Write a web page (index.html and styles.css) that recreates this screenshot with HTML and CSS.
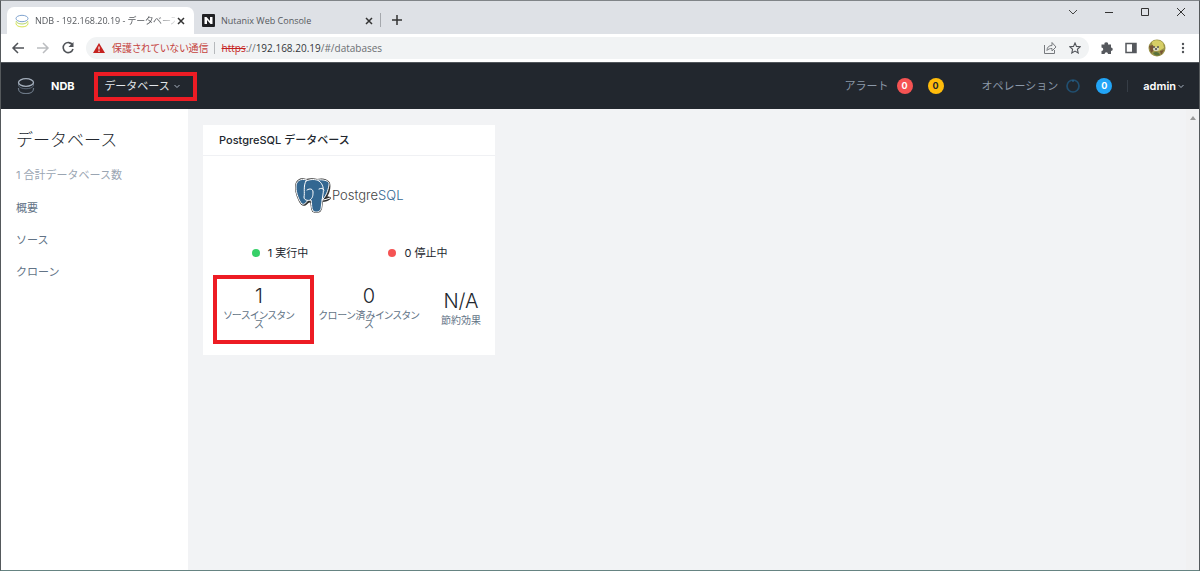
FILE: index.html
```html
<!DOCTYPE html>
<html lang="ja">
<head>
    <meta charset="UTF-8">
    <meta name="viewport" content="width=device-width, initial-scale=1.0">
    <title>NDB - 192.168.20.19 - データベース</title>
    <link rel="stylesheet" href="styles.css">
</head>
<body>
    <div class="window">
        <div class="tabs">
            <div class="tab active">
                <svg width="14" height="14" viewBox="0 0 14 14" fill="none">
                    <path d="M1 8.500v1c0 4.500 12 4.500 12 0v-1" stroke="#d5e34e"/>
                    <path d="M1 7c1 4 11 4 12 0" stroke="#b4d56a"/>
                    <ellipse cx="7" cy="4.500" rx="6" ry="3.200" stroke="#7fa3cf"/>
                </svg>
                <span class="tab-title">NDB - 192.168.20.19 - データベース</span>
                <button class="close" aria-label="Close tab"><svg width="8" height="8" viewBox="0 0 8 8"><path d="M1 1l6 6M7 1L1 7" stroke="#333" stroke-width="1.5"/></svg></button>
            </div>
            <div class="tab">
                <svg width="13" height="13" viewBox="0 0 13 13">
                    <rect width="13" height="13" rx="1" fill="#202124"/>
                    <path d="M2.500 3h2l3.500 4V3h2.500v7h-2L5 6v4H2.500z" fill="#fff"/>
                </svg>
                <span class="tab-title">Nutanix Web Console</span>
                <button class="close" aria-label="Close tab"><svg width="8" height="8" viewBox="0 0 8 8"><path d="M1 1l6 6M7 1L1 7" stroke="#333" stroke-width="1.500"/></svg></button>
            </div>
            <button class="new-tab" aria-label="New tab"><svg width="10" height="10" viewBox="0 0 10 10"><path d="M5 0v10M0 5h10" stroke="#333" stroke-width="1.500"/></svg></button>
            <div class="window-buttons">
                <button aria-label="Tab search"><svg width="10" height="10" viewBox="0 0 10 10" fill="none"><path d="M1 3l4 4 4-4" stroke="#444"/></svg></button>
                <button aria-label="Minimize"><svg width="10" height="10" viewBox="0 0 10 10"><path d="M1 5.500h8" stroke="#333"/></svg></button>
                <button aria-label="Maximize"><svg width="10" height="10" viewBox="0 0 10 10" fill="none"><path d="M1.500 1.500h7v7h-7z" stroke="#333"/></svg></button>
                <button aria-label="Close"><svg width="10" height="10" viewBox="0 0 10 10"><path d="M1 1l8 8M9 1L1 9" stroke="#333"/></svg></button>
            </div>
        </div>

        <div class="toolbar">
            <button aria-label="Back"><svg width="14" height="14" viewBox="0 0 14 14" fill="none"><path d="M13 7H2M7 2L2 7l5 5" stroke="#505358" stroke-width="1.500"/></svg></button>
            <button aria-label="Forward"><svg width="14" height="14" viewBox="0 0 14 14" fill="none"><path d="M1 7h11M7 2l5 5-5 5" stroke="#bbbdc0" stroke-width="1.500"/></svg></button>
            <button aria-label="Reload"><svg width="14" height="14" viewBox="0 0 14 14" fill="none"><path d="M11.500 4A5 5 0 1 0 12 8" stroke="#505358" stroke-width="1.600"/><path d="M12.500 1v5h-5z" fill="#505358"/></svg></button>
            <div class="address">
                <svg width="12" height="12" viewBox="0 0 12 12"><path d="M6 1l6 10H0z" fill="#c5221f"/><path d="M6 4.500v3M6 8.500V10" stroke="#fff" stroke-width="1.200"/></svg>
                <span class="warning">保護されていない通信</span>
                <span class="url"><s>https</s>://<b>192.168.20.19</b>/#/databases</span>
                <button aria-label="Share"><svg width="14" height="14" viewBox="0 0 14 14" fill="none"><path d="M1.500 4v8.500h10V9M4 9.500C4 6 6 4.500 9 4.500v-3L13 6l-4 4V7.500C7 7.500 5 8 4 9.500z" stroke="#777a7e"/></svg></button>
                <button aria-label="Bookmark"><svg width="12" height="12" viewBox="0 0 12 12" fill="none"><path d="M6 1l1.500 3.400 3.700.4-2.800 2.500.8 3.700L6 9.100 2.800 11l.8-3.700L.8 4.800l3.700-.4z" stroke="#505358" stroke-width="1.100"/></svg></button>
            </div>
            <button aria-label="Extensions"><svg width="14" height="14" viewBox="0 0 14 14"><path d="M1.500 3.500H4.500a1.800 1.800 0 1 1 3.500 0h3v3a1.700 1.700 0 1 1 0 3.500v3H8a1.700 1.700 0 0 0-3.400 0H1.500v-3a1.700 1.700 0 0 0 0-3.500z" fill="#55585d"/></svg></button>
            <button aria-label="Side panel"><svg width="12" height="12" viewBox="0 0 12 12"><path d="M1 1.500h10v9H1z" fill="none" stroke="#55585d" stroke-width="1.500"/><path d="M7 1.500h4v9H7z" fill="#55585d"/></svg></button>
            <button class="profile" aria-label="Profile">
                <svg width="18" height="18" viewBox="0 0 18 18">
                    <circle cx="9" cy="9" r="8.500" fill="#9a9448"/>
                    <path d="M4 3c3-3 9-2 11 1l1 5-5 3-6-2z" fill="#d6ce65"/>
                    <path d="M1 7l4-1 1 5-3 3zM12 12l4-1-3 5z" fill="#785335"/>
                    <ellipse cx="8" cy="10" rx="3" ry="2" fill="#d8d6bd"/>
                    <circle cx="6" cy="8" r="1" fill="#555"/><circle cx="10" cy="8" r="1" fill="#555"/><circle cx="8" cy="10" r="1" fill="#444"/>
                    <path d="M5 14c3-2 6-1 7 2-2 1-5 1-7-2z" fill="#58713b"/>
                </svg>
            </button>
            <button aria-label="Menu"><svg width="4" height="12" viewBox="0 0 4 12" fill="#505358"><circle cx="2" cy="2" r="1.200"/><circle cx="2" cy="6" r="1.200"/><circle cx="2" cy="10" r="1.200"/></svg></button>
        </div>

        <header>
            <svg class="logo" width="18" height="18" viewBox="0 0 18 18" fill="none">
                <path d="M1.500 11v1c0 6 15 6 15 0v-1" stroke="#6c7886" stroke-width="1.200"/>
                <path d="M1.500 6v2c0 5 15 5 15 0V6" stroke="#596574"/>
                <ellipse cx="9" cy="5.500" rx="7.500" ry="3.800" stroke="#a4afbc" stroke-width="1.300"/>
            </svg>
            <span class="product">NDB</span>
            <button class="nav-menu">データベース
                <svg width="6" height="6" viewBox="0 0 6 6" fill="none"><path d="M.5 2L3 4.500 5.500 2" stroke="#a9b4c1"/></svg>
            </button>
            <div class="alerts">
                <a href="#/alerts">アラート</a>
                <span class="badge red">0</span>
                <span class="badge yellow">0</span>
            </div>
            <div class="operations">
                <a href="#/operations">オペレーション</a>
                <svg width="14" height="14" viewBox="0 0 14 14" fill="none"><circle cx="7" cy="7" r="6" stroke="#214f70" stroke-width="1.700"/><path d="M7 1v2" stroke="#2c6f9d"/></svg>
                <span class="badge blue">0</span>
            </div>
            <button class="user">admin
                <svg width="6" height="6" viewBox="0 0 6 6" fill="none"><path d="M.5 2L3 4.500 5.500 2" stroke="#a9b4c1"/></svg>
            </button>
        </header>

        <div class="content">
            <nav class="sidebar">
                <h1>データベース</h1>
                <p>1 合計データベース数</p>
                <a href="#/databases">概要</a>
                <a href="#/sources">ソース</a>
                <a href="#/clones">クローン</a>
            </nav>
            <main>
                <section class="card">
                    <h2>PostgreSQL データベース</h2>
                    <svg class="postgres" width="112" height="38" viewBox="0 0 112 38">
                        <g stroke-linejoin="round" stroke-linecap="round">
                            <path d="M13 3C7 1 3 4 3 10c0 6 3 14 6 17 2 2 4 0 6-2l3-1c1 3 0 7 2 10 3 2 7 1 8-2l1-8c3 0 6-1 8-3l-4-1c3-5 4-10 3-14-3-4-8-4-12-3-3-1-7-1-11 0z" fill="#303030" stroke="#303030" stroke-width="2"/>
                            <g fill="#336791" stroke="#fff">
                                <path d="M14 3C7 1 3 4 3 10c0 6 3 14 6 17 2 1 4-1 6-4z"/>
                                <path d="M24 3c7-1 13 1 12 5-1 6-3 12-8 16z"/>
                                <path d="M13 4c4-2 10-2 13 0 4 3 5 8 4 13l-1 7-1 8c-1 3-5 4-8 2-2-3-1-8-2-11-4 1-7 0-7-3 1-4-1-11 2-16z"/>
                                <path d="M14 13c3-2 6-1 6 2s0 6-3 8M26 12c2-1 4-1 5 1M29 23c3 0 5-1 8-2" fill="none"/>
                            </g>
                        </g>
                        <text x="39" y="23"><tspan>Postgre</tspan><tspan class="sql">SQL</tspan></text>
                    </svg>
                    <div class="status">
                        <span><i class="dot green"></i>1 実行中</span>
                        <span><i class="dot stopped"></i>0 停止中</span>
                    </div>
                    <div class="stats">
                        <div class="stat selected"><strong>1</strong><span>ソースインスタンス</span></div>
                        <div class="stat"><strong>0</strong><span>クローン済みインスタンス</span></div>
                        <div class="stat"><strong>N/A</strong><span>節約効果</span></div>
                    </div>
                </section>
            </main>
            <div class="scrollbar"><svg width="6" height="4" viewBox="0 0 6 4"><path d="M3 0l3 4H0z" fill="#999"/></svg></div>
        </div>
    </div>
</body>
</html>
```
FILE: styles.css
```css
* {
    box-sizing: border-box;
}
body {
    margin: 0;
    font-family: Inter, "Noto Sans CJK JP", sans-serif;
    font-size: 11px;
    line-height: 16px;
    color: #22272e;
}
button {
    display: flex;
    align-items: center;
    justify-content: center;
    padding: 0;
    border: none;
    background: none;
    font: inherit;
    color: inherit;
    cursor: pointer;
}
a {
    color: inherit;
    text-decoration: none;
}
svg {
    flex-shrink: 0;
}
.window {
    display: flex;
    flex-direction: column;
    min-height: 100vh;
    border: 1px solid #55595c;
    border-top-color: #808488;
    border-bottom-color: #668482;
}

/* browser tabs */
.tabs {
    display: flex;
    height: 33px;
    padding: 6px 0 0 6px;
    background: #dee1e6;
    font-family: "Open Sans", "Noto Sans CJK JP", sans-serif;
    font-size: 9px;
    color: #55585d;
}
.tab {
    display: flex;
    align-items: center;
    gap: 6px;
    width: 187px;
    padding: 0 8px;
}
.tab.active {
    padding-right: 9px;
    border-radius: 7px 7px 0 0;
    background: #fff;
}
.tab-title {
    flex: 1;
    min-width: 0;
    margin-right: -4px;
    white-space: nowrap;
    font-feature-settings: "palt";
}
.active .tab-title {
    -webkit-mask-image: linear-gradient(to right, #000 85%, rgba(0, 0, 0, 0.2));
    mask-image: linear-gradient(to right, #000 85%, rgba(0, 0, 0, 0.2));
}
.new-tab {
    width: 33px;
    height: 14px;
    margin-top: 6px;
    margin-left: -1px;
    border-left: 1px solid #a5a8ad;
}
.window-buttons {
    display: flex;
    height: 10px;
    margin-left: auto;
}
.window-buttons button {
    width: 36px;
}

/* address bar */
.toolbar {
    display: flex;
    align-items: center;
    gap: 11px;
    height: 28px;
    padding: 0 14px 0 10px;
    background: #fff;
    font-family: "Open Sans", "Noto Sans CJK JP", sans-serif;
}
.profile {
    margin-right: 4px;
}
.address {
    display: flex;
    align-items: center;
    flex: 1;
    gap: 12px;
    height: 22px;
    padding: 0 8px 0 7px;
    border-radius: 11px;
    background: #f1f3f4;
}
.warning {
    margin-left: -5px;
    color: #c5423d;
    font-size: 10px;
    font-feature-settings: "palt";
}
.url {
    flex: 1;
    margin-left: -7px;
    padding-left: 7px;
    border-left: 1px solid #b6b9bc;
    font-size: 10px;
    line-height: 12px;
    color: #6b6e72;
}
.url s {
    color: #c5221f;
}
.url b {
    font-weight: normal;
    color: #34373b;
}

/* NDB header */
header {
    display: flex;
    align-items: center;
    height: 47px;
    padding: 0 15px 0 16px;
    border-top: 1px solid #51565b;
    background: #22272e;
    color: #8b98a8;
}
.product {
    margin: 0 19px 0 16px;
    font-weight: 700;
    color: #fff;
}
.nav-menu {
    gap: 4px;
    width: 103px;
    height: 29px;
    padding-right: 6px;
    border: 4px solid #ed1c24;
    color: #e3e7ec;
}
.alerts,
.operations {
    display: flex;
    align-items: center;
    gap: 8px;
}
.alerts {
    margin-left: auto;
}
.operations {
    margin-left: 38px;
}
.badge {
    width: 16px;
    border-radius: 50%;
    text-align: center;
    font-size: 9px;
    font-weight: 700;
    color: #fff;
}
.red {
    background: #f55353;
}
.yellow {
    margin-left: 7px;
    background: #ffbc0b;
    color: #22272e;
}
.blue {
    margin-left: 8px;
    background: #22a5f7;
}
.user {
    gap: 2px;
    height: 12px;
    margin-left: 15px;
    padding-left: 15px;
    border-left: 1px solid #363d46;
    font-weight: 600;
    color: #fff;
}

/* page */
.content {
    display: flex;
    flex: 1;
    background: #f2f3f5;
}
.sidebar {
    display: flex;
    flex-direction: column;
    gap: 16px;
    width: 187px;
    padding: 20px 15px;
    background: #fff;
    color: #627386;
}
.sidebar h1 {
    margin: 0;
    font-size: 17px;
    font-weight: 300;
    line-height: 22px;
    color: #22272e;
}
.sidebar p {
    margin: 0 0 1px;
    color: #9aa5b2;
}
main {
    flex: 1;
    padding: 16px 15px;
}
.card {
    width: 292px;
    min-height: 230px;
    background: #fff;
}
.card h2 {
    margin: 0;
    padding: 7px 16px;
    border-bottom: 1px solid #f0f1f4;
    font-size: 11px;
    font-weight: 500;
}
.postgres {
    display: block;
    margin: 21px auto 0;
    font-family: Inter, sans-serif;
    font-size: 13px;
    font-weight: 300;
    fill: #444;
}
.sql {
    fill: #336791;
}
.status {
    display: grid;
    grid-template-columns: 1fr 1fr;
    margin: 30px 8px 0;
    text-align: center;
}
.dot {
    display: inline-block;
    width: 8px;
    height: 8px;
    margin-right: 8px;
    border-radius: 50%;
}
.green {
    background: #36d068;
}
.stopped {
    background: #f55353;
}
.stats {
    display: grid;
    grid-template-columns: 76fr 108fr 40fr;
    gap: 18px;
    align-items: center;
    margin: 25px 14px 0 18px;
    text-align: center;
    font-size: 10px;
    line-height: 9px;
    color: #627386;
}
.stat {
    position: relative;
}
.stat strong {
    display: block;
    margin-bottom: 5px;
    font-size: 20px;
    font-weight: 300;
    line-height: 20px;
    color: #22272e;
}
.stat span {
    font-feature-settings: "palt";
    word-break: break-all;
}
.selected::after {
    content: "";
    position: absolute;
    inset: -11px -17px -15px -8px;
    border: 4px solid #ed1c24;
}
.scrollbar {
    width: 13px;
    padding-top: 5px;
    background: #f1f1f2;
    text-align: center;
    line-height: 4px;
}
```
